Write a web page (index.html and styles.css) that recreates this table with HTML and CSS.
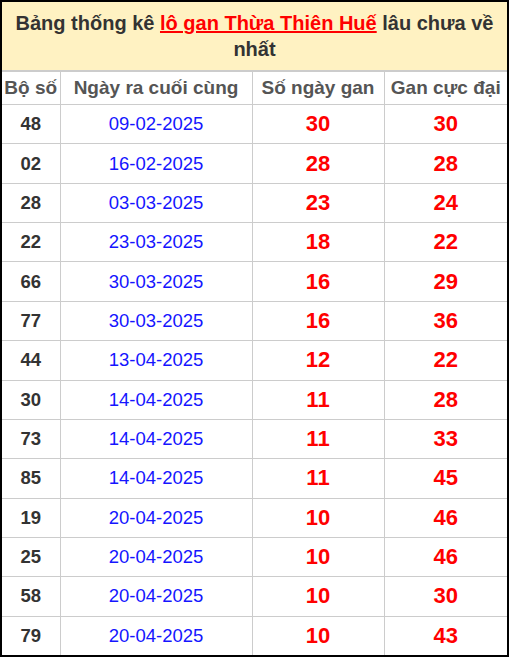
FILE: index.html
```html
<!DOCTYPE html>
<html lang="vi">
<head>
<meta charset="utf-8">
<title>Lô gan Thừa Thiên Huế</title>
<link rel="stylesheet" href="styles.css">
</head>
<body>
<div class="frame">
  <div class="title">Bảng thống kê <a href="#" class="hl">lô gan Thừa Thiên Huế</a> lâu chưa về nhất</div>
  <table class="gan">
    <colgroup>
      <col class="c1"><col class="c2"><col class="c3"><col class="c4">
    </colgroup>
    <thead>
      <tr><th>Bộ số</th><th>Ngày ra cuối cùng</th><th>Số ngày gan</th><th>Gan cực đại</th></tr>
    </thead>
    <tbody>
      <tr><td class="so">48</td><td class="date">09-02-2025</td><td class="red">30</td><td class="red">30</td></tr>
      <tr><td class="so">02</td><td class="date">16-02-2025</td><td class="red">28</td><td class="red">28</td></tr>
      <tr><td class="so">28</td><td class="date">03-03-2025</td><td class="red">23</td><td class="red">24</td></tr>
      <tr><td class="so">22</td><td class="date">23-03-2025</td><td class="red">18</td><td class="red">22</td></tr>
      <tr><td class="so">66</td><td class="date">30-03-2025</td><td class="red">16</td><td class="red">29</td></tr>
      <tr><td class="so">77</td><td class="date">30-03-2025</td><td class="red">16</td><td class="red">36</td></tr>
      <tr><td class="so">44</td><td class="date">13-04-2025</td><td class="red">12</td><td class="red">22</td></tr>
      <tr><td class="so">30</td><td class="date">14-04-2025</td><td class="red">11</td><td class="red">28</td></tr>
      <tr><td class="so">73</td><td class="date">14-04-2025</td><td class="red">11</td><td class="red">33</td></tr>
      <tr><td class="so">85</td><td class="date">14-04-2025</td><td class="red">11</td><td class="red">45</td></tr>
      <tr><td class="so">19</td><td class="date">20-04-2025</td><td class="red">10</td><td class="red">46</td></tr>
      <tr><td class="so">25</td><td class="date">20-04-2025</td><td class="red">10</td><td class="red">46</td></tr>
      <tr><td class="so">58</td><td class="date">20-04-2025</td><td class="red">10</td><td class="red">30</td></tr>
      <tr><td class="so">79</td><td class="date">20-04-2025</td><td class="red">10</td><td class="red">43</td></tr>
    </tbody>
  </table>
</div>
</body>
</html>
```

FILE: styles.css
```css
html, body {
  margin: 0;
  padding: 0;
  background: #fff;
}
.frame {
  box-sizing: border-box;
  width: 509px;
  height: 657px;
  border: 2px solid #000;
  overflow: hidden;
  font-family: "Liberation Sans", Arial, sans-serif;
}
.title {
  box-sizing: border-box;
  height: 69px;
  background: #fff2c2;
  color: #333;
  font-weight: bold;
  font-size: 20px;
  line-height: 26px;
  text-align: center;
  padding: 8px 4px 0;
  border-bottom: 1px solid #ccc;
}
.hl {
  color: #ff0000;
  text-decoration: underline;
}
.gan {
  width: 505px;
  border-collapse: collapse;
  table-layout: fixed;
}
.c1 { width: 58px; }
.c2 { width: 192px; }
.c3 { width: 132px; }
.c4 { width: 123px; }
.gan th, .gan td {
  border: 1px solid #ccc;
  text-align: center;
  padding: 0;
  white-space: nowrap;
  overflow: hidden;
}
.gan tr > :first-child { border-left: 0; }
.gan tr > :last-child { border-right: 0; }
.gan th {
  height: 32px;
  color: #555;
  font-size: 19px;
  font-weight: bold;
}
.gan td {
  height: 38.36px;
}
.so {
  color: #333;
  font-weight: bold;
  font-size: 18.5px;
}
.date {
  color: #1515ff;
  font-size: 18.5px;
}
.red {
  color: #ff0000;
  font-weight: bold;
  font-size: 22px;
}
```
